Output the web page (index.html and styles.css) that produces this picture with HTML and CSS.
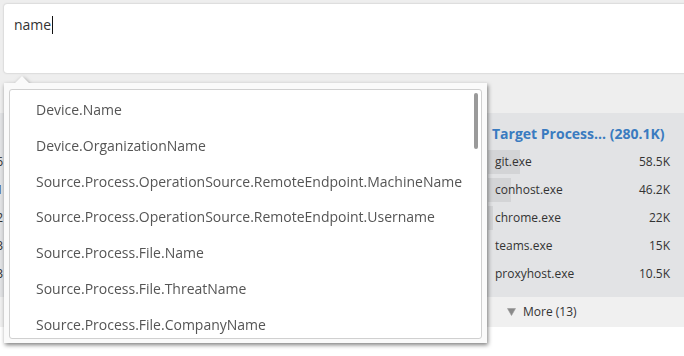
FILE: index.html
```html
<!DOCTYPE html>
<html lang="en">
<head>
    <meta charset="UTF-8">
    <meta name="viewport" content="width=device-width, initial-scale=1.0">
    <title>Query Suggestions</title>
    <link rel="stylesheet" href="styles.css">
</head>
<body>
    <div class="top">
        <div class="search">
            <span class="query">name</span><span class="caret"></span>
        </div>
    </div>

    <div class="panels">
        <div class="col col-edge">
            <div class="row"><span class="value">1.6</span></div>
            <div class="row"><span class="value">1.1</span></div>
            <div class="row"><span class="value">0.2</span></div>
            <div class="row"><span class="value">3</span></div>
            <div class="row"><span class="value">3</span></div>
        </div>
        <div class="col col-hidden"></div>
        <div class="col col-target">
            <div class="col-title">Target Process... (280.1K)</div>
            <div class="row"><span class="bar" style="width: 32px"></span><span class="label">git.exe</span><span class="value">58.5K</span></div>
            <div class="row"><span class="bar" style="width: 23px"></span><span class="label">conhost.exe</span><span class="value">46.2K</span></div>
            <div class="row"><span class="bar" style="width: 5px"></span><span class="label">chrome.exe</span><span class="value">22K</span></div>
            <div class="row"><span class="label">teams.exe</span><span class="value">15K</span></div>
            <div class="row"><span class="label">proxyhost.exe</span><span class="value">10.5K</span></div>
        </div>
    </div>

    <div class="more-row">
        <div class="more-spacer"></div>
        <div class="more">
            <svg class="more-icon" width="9" height="8" viewBox="0 0 9 8"><polygon points="0.5,0.5 8.5,0.5 4.5,7.5" fill="#8a8a8a" stroke="#9a9a9a" stroke-width="0.6"/></svg>
            <span>More (13)</span>
        </div>
    </div>

    <div class="popover">
        <div class="suggestions">
            <div class="item">Device.Name</div>
            <div class="item">Device.OrganizationName</div>
            <div class="item">Source.Process.OperationSource.RemoteEndpoint.MachineName</div>
            <div class="item">Source.Process.OperationSource.RemoteEndpoint.Username</div>
            <div class="item">Source.Process.File.Name</div>
            <div class="item">Source.Process.File.ThreatName</div>
            <div class="item">Source.Process.File.CompanyName</div>
            <div class="item">Source.Process.File.ProductName</div>
            <div class="thumb"></div>
        </div>
    </div>
</body>
</html>
```

FILE: styles.css
```css
body {
    margin: 0;
    font-family: "Open Sans", "Liberation Sans", sans-serif;
    background: #fff;
    color: #333;
    overflow: hidden;
}
.top {
    background: #eeeeee;
    padding: 4px 0 40px 4px;
}
.search {
    height: 69px;
    box-sizing: border-box;
    margin-right: -10px;
    padding: 11px 10px;
    background: #fff;
    border-radius: 3px;
    box-shadow: 0 0 2px rgba(0, 0, 0, 0.25);
    font-size: 14px;
    line-height: 20px;
    color: #333;
}
.caret {
    display: inline-block;
    width: 1px;
    height: 18px;
    margin-left: 1px;
    vertical-align: -4px;
    background: #111;
}
.panels {
    display: flex;
    height: 184px;
    background: #e2e3e5;
    font-size: 12px;
}
.col {
    padding-top: 37px;
    box-sizing: border-box;
}
.col-edge {
    width: 17px;
    overflow: hidden;
}
.col-hidden {
    flex: 1;
}
.col-target {
    width: 196px;
    padding-top: 11px;
}
.col-title {
    padding-left: 4px;
    margin-bottom: 6px;
    font-size: 14px;
    font-weight: bold;
    line-height: 20px;
    color: #3a7bc0;
    white-space: nowrap;
}
.row {
    position: relative;
    display: flex;
    justify-content: flex-end;
    height: 24px;
    margin-bottom: 4px;
    line-height: 24px;
    padding-right: 14px;
    white-space: nowrap;
}
.col-target .row {
    justify-content: space-between;
    padding-left: 7px;
}
.bar {
    position: absolute;
    left: 0;
    top: 0;
    bottom: 0;
    background: #d3d4d6;
}
.label, .value {
    position: relative;
}
.more-row {
    display: flex;
    height: 30px;
    background: #f0f0f0;
    font-size: 12px;
    line-height: 30px;
}
.more-spacer {
    flex: 1;
}
.more {
    width: 196px;
    box-sizing: border-box;
    padding-left: 19px;
    display: flex;
    align-items: center;
    gap: 7px;
    color: #333;
}
.more-icon {
    margin-top: -1px;
}
.popover {
    position: absolute;
    left: 4px;
    top: 83px;
    width: 483px;
    height: 260px;
    box-sizing: border-box;
    padding: 6px 5px 4px 5px;
    background: #fafafa;
    filter: drop-shadow(1px 2px 2px rgba(0, 0, 0, 0.5));
}
.popover::before {
    content: "";
    position: absolute;
    top: -7px;
    left: 11px;
    border-left: 7px solid transparent;
    border-right: 7px solid transparent;
    border-bottom: 7px solid #fafafa;
}
.suggestions {
    position: relative;
    height: 100%;
    box-sizing: border-box;
    padding-top: 2px;
    background: #fff;
    border: 1px solid #d0d0d0;
    border-radius: 3px;
    overflow: hidden;
}
.item {
    height: 35.8px;
    line-height: 36px;
    padding-left: 26px;
    font-size: 14px;
    color: #555;
    white-space: nowrap;
}
.thumb {
    position: absolute;
    top: 3px;
    left: 464px;
    width: 4px;
    height: 56px;
    border-radius: 2px;
    background: #9a9a9a;
}
```
